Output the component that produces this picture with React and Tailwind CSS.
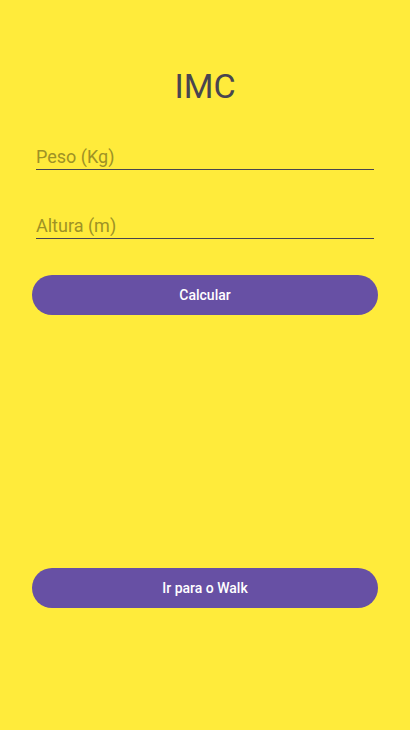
import React from "react";

const Field = ({ label, className }) => {
  return (
    <div className={"mx-1 border-b border-[#49454f] " + className}>
      <input
        type="text"
        placeholder={label}
        className="block h-6 w-full bg-transparent text-[18px] leading-6 text-[#49454f] outline-none placeholder:text-[#9e9225]"
      />
    </div>
  );
};

const App = () => {
  return (
    <div
      className="flex min-h-[730px] w-full flex-col bg-[#ffeb3b] px-8 pb-[122px] pt-[66px]"
      style={{ fontFamily: "Roboto, 'Noto Sans', sans-serif" }}
    >
      <h1 className="text-center text-[34px] font-normal leading-10 text-[#49454f]">
        IMC
      </h1>
      <Field label="Peso (Kg)" className="mt-[39px]" />
      <Field label="Altura (m)" className="mt-[44px]" />
      <button className="mt-[36px] h-10 w-full rounded-full bg-[#6750a4] text-sm font-medium text-white">
        Calcular
      </button>
      <div className="flex-1" />
      <button className="h-10 w-full rounded-full bg-[#6750a4] text-sm font-medium text-white">
        Ir para o Walk
      </button>
    </div>
  );
};

export default App;
